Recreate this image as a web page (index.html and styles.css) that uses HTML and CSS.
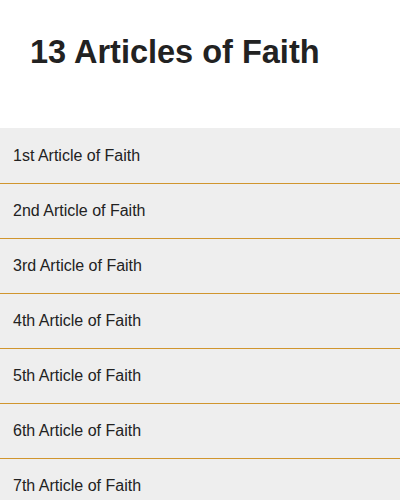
FILE: index.html
```html
<!DOCTYPE html>
<html>
<head>
<meta charset="utf-8">
<link rel="stylesheet" href="styles.css">
</head>
<body>
<header class="header">
  <h1 class="title">13 Articles of Faith</h1>
</header>
<ul class="list">
  <li class="item">1st Article of Faith</li>
  <li class="item">2nd Article of Faith</li>
  <li class="item">3rd Article of Faith</li>
  <li class="item">4th Article of Faith</li>
  <li class="item">5th Article of Faith</li>
  <li class="item">6th Article of Faith</li>
  <li class="item">7th Article of Faith</li>
</ul>
</body>
</html>
```
FILE: styles.css
```css
html, body {
  margin: 0;
  padding: 0;
  background: #ffffff;
  font-family: "Liberation Sans", Arial, Helvetica, sans-serif;
  color: #222222;
}
.header {
  height: 128px;
  box-sizing: border-box;
  padding: 34px 30px 0;
}
.title {
  margin: 0;
  font-size: 32.5px;
  line-height: 37px;
  font-weight: bold;
  color: #222222;
}
.list {
  list-style: none;
  margin: 0;
  padding: 1px 0 0;
  background: #eeeeee;
}
.item {
  padding: 18px 13px;
  font-size: 16px;
  line-height: 18px;
  border-bottom: 1px solid #d0952e;
  background: #eeeeee;
}
```
